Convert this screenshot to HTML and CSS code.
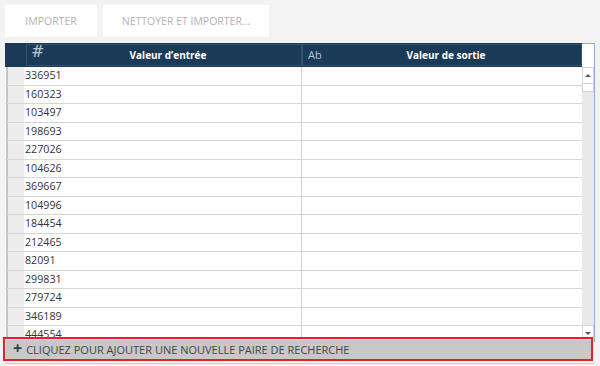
FILE: index.html
```html
<!DOCTYPE html>
<html lang="fr">
<head>
    <meta charset="UTF-8">
    <title>Paires de recherche</title>
    <link rel="stylesheet" href="styles.css">
</head>
<body>
    <!-- Toolbar -->
    <div class="toolbar">
        <button class="tool-btn btn-import">IMPORTER</button>
        <button class="tool-btn btn-clean">NETTOYER ET IMPORTER...</button>
    </div>

    <!-- Lookup Grid -->
    <div class="grid">
        <div class="grid-head">
            <div class="head-corner"></div>
            <div class="head-cell head-in">
                <span class="type-icon hash">#</span>
                <span class="head-label">Valeur d’entrée</span>
            </div>
            <div class="head-cell head-out">
                <span class="type-icon">Ab</span>
                <span class="head-label">Valeur de sortie</span>
            </div>
            <div class="head-gap"></div>
        </div>

        <div class="grid-body">
            <div class="rows">
                <div class="row"><div class="row-head"></div><div class="cell cell-in">336951</div><div class="cell cell-out"></div></div>
                <div class="row"><div class="row-head"></div><div class="cell cell-in">160323</div><div class="cell cell-out"></div></div>
                <div class="row"><div class="row-head"></div><div class="cell cell-in">103497</div><div class="cell cell-out"></div></div>
                <div class="row"><div class="row-head"></div><div class="cell cell-in">198693</div><div class="cell cell-out"></div></div>
                <div class="row"><div class="row-head"></div><div class="cell cell-in">227026</div><div class="cell cell-out"></div></div>
                <div class="row"><div class="row-head"></div><div class="cell cell-in">104626</div><div class="cell cell-out"></div></div>
                <div class="row"><div class="row-head"></div><div class="cell cell-in">369667</div><div class="cell cell-out"></div></div>
                <div class="row"><div class="row-head"></div><div class="cell cell-in">104996</div><div class="cell cell-out"></div></div>
                <div class="row"><div class="row-head"></div><div class="cell cell-in">184454</div><div class="cell cell-out"></div></div>
                <div class="row"><div class="row-head"></div><div class="cell cell-in">212465</div><div class="cell cell-out"></div></div>
                <div class="row"><div class="row-head"></div><div class="cell cell-in">82091</div><div class="cell cell-out"></div></div>
                <div class="row"><div class="row-head"></div><div class="cell cell-in">299831</div><div class="cell cell-out"></div></div>
                <div class="row"><div class="row-head"></div><div class="cell cell-in">279724</div><div class="cell cell-out"></div></div>
                <div class="row"><div class="row-head"></div><div class="cell cell-in">346189</div><div class="cell cell-out"></div></div>
                <div class="row"><div class="row-head"></div><div class="cell cell-in">444554</div><div class="cell cell-out"></div></div>
            </div>

            <!-- Vertical Scrollbar -->
            <div class="scrollbar">
                <div class="scroll-btn scroll-up"><span class="arrow arrow-up"></span></div>
                <div class="scroll-thumb"></div>
                <div class="scroll-track"></div>
                <div class="scroll-btn scroll-down"><span class="arrow arrow-down"></span></div>
            </div>
        </div>

        <!-- Add Row Bar -->
        <div class="add-bar">
            <span class="add-plus">+</span> CLIQUEZ POUR AJOUTER UNE NOUVELLE PAIRE DE RECHERCHE
        </div>
        <div class="focus-line"></div>
    </div>
</body>
</html>
```

FILE: styles.css
```css
/* General Styles */
body {
    margin: 0;
    font-family: "Open Sans", "Noto Sans", sans-serif;
    background-color: #f3f3f3;
    overflow: hidden;
}

/* Toolbar */
.toolbar {
    display: flex;
    gap: 6px;
    padding: 5px 0 0 5px;
}

.tool-btn {
    height: 32px;
    border: none;
    background: #fff;
    color: #b3b3b3;
    font-family: inherit;
    font-size: 10.5px;
    padding: 0;
}

.btn-import {
    width: 92px;
}

.btn-clean {
    width: 166px;
}

/* Grid */
.grid {
    width: 590px;
    margin: 6px 0 0 5px;
}

.grid-head {
    display: flex;
    height: 24px;
    background: #1b3a58;
}

.head-corner {
    width: 21px;
}

.head-cell {
    position: relative;
    display: flex;
    align-items: center;
    justify-content: center;
    box-sizing: border-box;
    height: 22px;
    margin-top: 1px;
    border: 1px solid #34526f;
    color: #fff;
    font-size: 10px;
    font-weight: bold;
}

.head-in {
    width: 276px;
}

.head-out {
    width: 280px;
}

.head-label {
    padding-left: 8px;
}

.type-icon {
    position: absolute;
    left: 5px;
    top: 2px;
    color: #b9c3cd;
    font-weight: normal;
    font-size: 11px;
}

.type-icon.hash {
    left: 4px;
    top: -3px;
    font-family: "DejaVu Serif", serif;
    font-style: italic;
    font-size: 16px;
}

.head-gap {
    flex: 1;
    background: #fff;
    border-top: 1px solid #8fb0d4;
    border-right: 1px solid #8fb0d4;
}

/* Body */
.grid-body {
    display: flex;
    height: 275px;
    border-right: 1px solid #8fb0d4;
}

.rows {
    width: 577px;
    overflow: hidden;
}

.row {
    display: flex;
    box-sizing: border-box;
    height: 18.5px;
    border-bottom: 1px solid #d6d6d6;
    background: #fff;
}

.row-head {
    width: 16px;
    margin-left: 1px;
    border-left: 2px solid #c4c4c4;
    background: #ececec;
}

.cell {
    box-sizing: border-box;
    font-size: 10.7px;
    color: #333;
    line-height: 17px;
}

.cell-in {
    width: 278px;
    padding-left: 1px;
    border-right: 1px solid #cfcfcf;
}

.cell-out {
    flex: 1;
}

/* Scrollbar */
.scrollbar {
    flex: 1;
    display: flex;
    flex-direction: column;
    background: #e9e9e9;
}

.scroll-btn {
    display: flex;
    align-items: center;
    justify-content: center;
    box-sizing: border-box;
    height: 17px;
    background: #fff;
    border: 1px solid #d4d4d4;
}

.scroll-thumb {
    height: 7px;
    background: #fff;
    border: 1px solid #d4d4d4;
    border-top: none;
}

.scroll-track {
    flex: 1;
}

.arrow {
    width: 0;
    height: 0;
    border-left: 3px solid transparent;
    border-right: 3px solid transparent;
}

.arrow-up {
    border-bottom: 3px solid #555;
}

.arrow-down {
    border-top: 3px solid #555;
}

/* Add Row Bar */
.add-bar {
    position: relative;
    z-index: 2;
    display: flex;
    align-items: center;
    gap: 4px;
    box-sizing: border-box;
    width: 590px;
    height: 24px;
    margin: -5px 0 0 -2px;
    padding-left: 8px;
    background: #c8c8c8;
    border: 2px solid #e3202b;
    box-shadow: inset 1px 1px 0 #e2e2e2;
    color: #444;
    font-size: 11px;
}

.add-plus {
    font-size: 16px;
    font-weight: bold;
    line-height: 1;
    color: #2e3f52;
    margin-top: -2px;
}

.focus-line {
    height: 1px;
    margin-top: 2px;
    background: #f2c2c6;
}
```
